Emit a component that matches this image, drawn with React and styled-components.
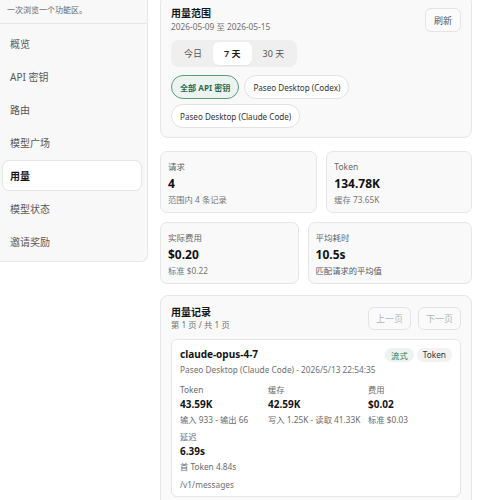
import React from 'react';
import styled, { createGlobalStyle, css } from 'styled-components';

const GlobalStyle = createGlobalStyle`
  html, body {
    margin: 0;
    padding: 0;
    background: #fff;
  }
  body {
    font-family: "Noto Sans", "Noto Sans CJK SC", sans-serif;
    color: #1c1c1c;
    overflow: hidden;
  }
  * {
    box-sizing: border-box;
  }
`;

const Shell = styled.div`
  display: flex;
  align-items: flex-start;
  gap: 12px;
`;

const Sidebar = styled.aside`
  width: 148px;
  flex: none;
  background: #f8f8f8;
  border: 1px solid #e6e6e6;
  border-left: none;
  border-top: none;
  border-radius: 0 0 7px 0;
`;

const SideHeader = styled.div`
  padding: 3px 8px 6px 7px;
  border-bottom: 1px solid #e6e6e6;
`;

const SideDesc = styled.div`
  font-size: 8px;
  line-height: 14px;
  color: #666;
`;

const Nav = styled.nav`
  display: flex;
  flex-direction: column;
  gap: 2px;
  padding: 4px 5px 4px 2px;
`;

const NavItem = styled.div`
  height: 31px;
  display: flex;
  align-items: center;
  padding-left: 7px;
  font-size: 10px;
  color: #585858;
  border: 1px solid transparent;
  border-radius: 7px;

  ${(p) =>
    p.$active &&
    css`
      background: #fff;
      border-color: #e4e4e4;
      color: #151515;
      font-weight: 600;
    `}
`;

const Main = styled.main`
  width: 312px;
  flex: none;
  margin-top: -5px;
  display: flex;
  flex-direction: column;
`;

const Card = styled.section`
  background: #f9f9f9;
  border: 1px solid #e6e6e6;
  border-radius: 8px;
  padding: 10px 10px 9px;
  margin-bottom: ${(p) => p.$gap || 0}px;
`;

const HeadRow = styled.div`
  display: flex;
  align-items: center;
  justify-content: space-between;
`;

const Title = styled.div`
  font-size: 10px;
  line-height: ${(p) => p.$lh || 14}px;
  font-weight: 700;
  color: #161616;
`;

const Muted = styled.div`
  font-size: 8.3px;
  line-height: ${(p) => p.$lh || 14}px;
  color: #707070;
`;

const Button = styled.button`
  height: ${(p) => p.$h || 24}px;
  padding: 0 ${(p) => p.$px || 8}px;
  font-family: inherit;
  font-size: 9px;
  color: ${(p) => (p.disabled ? '#b3b3b3' : '#555')};
  background: ${(p) => (p.disabled ? '#fafafa' : '#fbfbfb')};
  border: 1px solid #e4e4e4;
  border-radius: 6px;
`;

const Segmented = styled.div`
  display: inline-flex;
  margin-top: 6px;
  padding: 2px;
  background: #efefef;
  border-radius: 8px;
`;

const Segment = styled.div`
  height: 23px;
  padding: 0 11px;
  display: flex;
  align-items: center;
  font-size: 9px;
  color: #555;
  border-radius: 6px;

  ${(p) =>
    p.$active &&
    css`
      background: #fff;
      color: #1a1a1a;
      font-weight: 600;
      box-shadow: 0 1px 1px rgba(0, 0, 0, 0.04);
    `}
`;

const ChipRow = styled.div`
  display: flex;
  flex-wrap: wrap;
  gap: 5px 5px;
  margin-top: 8px;
`;

const Chip = styled.div`
  height: 24px;
  padding: 0 8px;
  display: flex;
  align-items: center;
  font-size: 8.1px;
  color: #333;
  background: #fff;
  border: 1px solid #e2e2e2;
  border-radius: 999px;

  ${(p) =>
    p.$active &&
    css`
      background: #ecf4f1;
      border-color: #5d9a7e;
      color: #2d6a4e;
      font-weight: 700;
    `}
`;

const StatRow = styled.div`
  display: flex;
  gap: 9px;
  margin-bottom: ${(p) => p.$gap}px;
`;

const StatCard = styled.div`
  flex: ${(p) => p.$grow} 1 0;
  background: #f9f9f9;
  border: 1px solid #e6e6e6;
  border-radius: 7px;
  padding: 7px 7px 4px;
`;

const StatLabel = styled.div`
  font-size: 8.5px;
  line-height: 16px;
  color: #666;
`;

const StatValue = styled.div`
  font-size: 12px;
  line-height: 17px;
  font-weight: 700;
  color: #111;
`;

const StatSub = styled.div`
  font-size: 8.3px;
  line-height: 16px;
  color: ${(p) => p.$tone || '#777'};
`;

const Pager = styled.div`
  display: flex;
  gap: 7px;
`;

const Record = styled.div`
  margin-top: 8px;
  background: #fff;
  border: 1px solid #e6e6e6;
  border-radius: 6px;
  padding: 7px 8px 5px;
`;

const RecordHead = styled.div`
  display: flex;
  align-items: center;
  justify-content: space-between;
`;

const ModelName = styled.div`
  font-size: 10px;
  line-height: 15px;
  font-weight: 700;
  color: #141414;
`;

const Badges = styled.div`
  display: flex;
  gap: 3px;
`;

const Badge = styled.span`
  height: 14px;
  padding: 0 6px;
  display: inline-flex;
  align-items: center;
  font-size: 8.3px;
  border-radius: 999px;
  background: ${(p) => (p.$green ? '#eef3ef' : '#f2f2f2')};
  color: ${(p) => (p.$green ? '#2f7a4e' : '#333')};
`;

const MetricGrid = styled.div`
  display: grid;
  grid-template-columns: 88px 100px 1fr;
  row-gap: 2px;
  margin-top: 4px;
`;

const Metric = styled.div`
  font-size: 8.3px;
  line-height: 15px;
  color: #6a6a6a;
  white-space: nowrap;
`;

const MetricValue = styled.div`
  font-size: 10px;
  line-height: 15px;
  font-weight: 700;
  color: #141414;
`;

const Endpoint = styled.div`
  margin-top: 4px;
  font-size: 8.3px;
  line-height: 13px;
  color: #707070;
`;

const navItems = ['概览', 'API 密钥', '路由', '模型广场', '用量', '模型状态', '邀请奖励'];

const ranges = ['今日', '7 天', '30 天'];

const keys = ['全部 API 密钥', 'Paseo Desktop (Codex)', 'Paseo Desktop (Claude Code)'];

const metrics = [
  { label: 'Token', value: '43.59K', sub: '输入 933 - 输出 66' },
  { label: '缓存', value: '42.59K', sub: '写入 1.25K - 读取 41.33K' },
  { label: '费用', value: '$0.02', sub: '标准 $0.03' },
  { label: '延迟', value: '6.39s', sub: '首 Token 4.84s' },
];

function Stat({ grow, label, value, sub, tone }) {
  return (
    <StatCard $grow={grow}>
      <StatLabel>{label}</StatLabel>
      <StatValue>{value}</StatValue>
      <StatSub $tone={tone}>{sub}</StatSub>
    </StatCard>
  );
}

export default function App() {
  return (
    <>
      <GlobalStyle />
      <Shell>
        <Sidebar>
          <SideHeader>
            <SideDesc>一次浏览一个功能区。</SideDesc>
          </SideHeader>
          <Nav>
            {navItems.map((item) => (
              <NavItem key={item} $active={item === '用量'}>
                {item}
              </NavItem>
            ))}
          </Nav>
        </Sidebar>

        <Main>
          <Card $gap={13}>
            <HeadRow>
              <div>
                <Title>用量范围</Title>
                <Muted>2026-05-09 至 2026-05-15</Muted>
              </div>
              <Button $px={8}>刷新</Button>
            </HeadRow>
            <Segmented>
              {ranges.map((r) => (
                <Segment key={r} $active={r === '7 天'}>
                  {r}
                </Segment>
              ))}
            </Segmented>
            <ChipRow>
              {keys.map((k, i) => (
                <Chip key={k} $active={i === 0}>
                  {k}
                </Chip>
              ))}
            </ChipRow>
          </Card>

          <StatRow $gap={9}>
            <Stat grow={158} label="请求" value="4" sub="范围内 4 条记录" />
            <Stat grow={145} label="Token" value="134.78K" sub="缓存 73.65K" />
          </StatRow>
          <StatRow $gap={11}>
            <Stat grow={137} label="实际费用" value="$0.20" sub="标准 $0.22" />
            <Stat grow={166} label="平均耗时" value="10.5s" sub="匹配请求的平均值" tone="#4f5b6b" />
          </StatRow>

          <Card>
            <HeadRow>
              <div>
                <Title $lh={13}>用量记录</Title>
                <Muted $lh={12}>第 1 页 / 共 1 页</Muted>
              </div>
              <Pager>
                <Button $h={23} $px={7} disabled>上一页</Button>
                <Button $h={23} $px={7} disabled>下一页</Button>
              </Pager>
            </HeadRow>
            <Record>
              <RecordHead>
                <ModelName>claude-opus-4-7</ModelName>
                <Badges>
                  <Badge $green>流式</Badge>
                  <Badge>Token</Badge>
                </Badges>
              </RecordHead>
              <Muted $lh={16}>Paseo Desktop (Claude Code) - 2026/5/13 22:54:35</Muted>
              <MetricGrid>
                {metrics.map((m) => (
                  <div key={m.label}>
                    <Metric>{m.label}</Metric>
                    <MetricValue>{m.value}</MetricValue>
                    <Metric>{m.sub}</Metric>
                  </div>
                ))}
              </MetricGrid>
              <Endpoint>/v1/messages</Endpoint>
            </Record>
          </Card>
        </Main>
      </Shell>
    </>
  );
}
